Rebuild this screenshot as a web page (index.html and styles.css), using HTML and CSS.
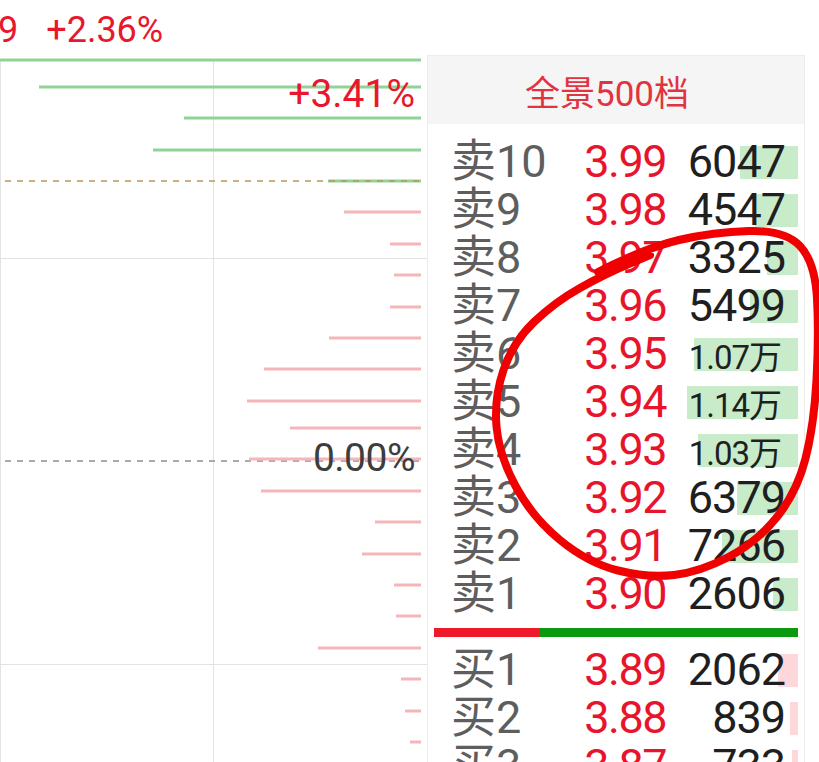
FILE: index.html
```html
<!DOCTYPE html>
<html lang="zh-CN">
<head>
    <meta charset="UTF-8">
    <meta name="viewport" content="width=device-width, initial-scale=1.0">
    <title>全景500档</title>
    <link rel="stylesheet" href="styles.css">
</head>
<body>

<div class="screen">
    <div class="depth">
        <svg class="depth-lines" width="427" height="762" viewBox="0 0 427 762">
            <g class="grid">
                <line x1="0.5" y1="60" x2="0.5" y2="762" />
                <line x1="213.5" y1="60" x2="213.5" y2="762" />
                <line x1="0" y1="258.5" x2="427" y2="258.5" />
                <line x1="0" y1="664.5" x2="427" y2="664.5" />
            </g>
            <g class="ask-lines">
                <line x1="0" y1="60" x2="421" y2="60" />
                <line x1="39" y1="87" x2="421" y2="87" />
                <line x1="184" y1="118" x2="421" y2="118" />
                <line x1="153" y1="150" x2="421" y2="150" />
                <line x1="328" y1="181" x2="421" y2="181" />
            </g>
            <line class="dash-prev" x1="5" y1="181" x2="421" y2="181" />
            <line class="dash-zero" x1="5" y1="461" x2="421" y2="461" />
            <g class="bid-lines">
                <line x1="344" y1="212" x2="421" y2="212" />
                <line x1="390" y1="244" x2="421" y2="244" />
                <line x1="394" y1="275" x2="421" y2="275" />
                <line x1="390" y1="307" x2="421" y2="307" />
                <line x1="329" y1="338" x2="421" y2="338" />
                <line x1="264" y1="369" x2="421" y2="369" />
                <line x1="247" y1="401" x2="421" y2="401" />
                <line x1="290" y1="428" x2="421" y2="428" />
                <line x1="249" y1="459" x2="421" y2="459" />
                <line x1="261" y1="491" x2="421" y2="491" />
                <line x1="375" y1="522" x2="421" y2="522" />
                <line x1="362" y1="554" x2="421" y2="554" />
                <line x1="394" y1="585" x2="421" y2="585" />
                <line x1="396" y1="616" x2="421" y2="616" />
                <line x1="318" y1="648" x2="421" y2="648" />
                <line x1="401" y1="679" x2="421" y2="679" />
                <line x1="405" y1="711" x2="421" y2="711" />
                <line x1="410" y1="742" x2="421" y2="742" />
            </g>
        </svg>
        <div class="pct pct-top"><span class="cut">9</span>+2.36%</div>
        <div class="pct pct-high">+3.41%</div>
        <div class="pct pct-zero">0.00%</div>
    </div>

    <div class="book">
        <div class="book-head">全景500档</div>

        <div class="levels asks">
            <div class="row"><span class="bar ask" style="width: 58px"></span><span class="name">卖10</span><span class="price">3.99</span><span class="vol">6047</span></div>
            <div class="row"><span class="bar ask" style="width: 43px"></span><span class="name">卖9</span><span class="price">3.98</span><span class="vol">4547</span></div>
            <div class="row"><span class="bar ask" style="width: 31px"></span><span class="name">卖8</span><span class="price">3.97</span><span class="vol">3325</span></div>
            <div class="row"><span class="bar ask" style="width: 48px"></span><span class="name">卖7</span><span class="price">3.96</span><span class="vol">5499</span></div>
            <div class="row"><span class="bar ask" style="width: 104px"></span><span class="name">卖6</span><span class="price">3.95</span><span class="vol small">1.07万</span></div>
            <div class="row"><span class="bar ask" style="width: 111px"></span><span class="name">卖5</span><span class="price">3.94</span><span class="vol small">1.14万</span></div>
            <div class="row"><span class="bar ask" style="width: 100px"></span><span class="name">卖4</span><span class="price">3.93</span><span class="vol small">1.03万</span></div>
            <div class="row"><span class="bar ask" style="width: 61px"></span><span class="name">卖3</span><span class="price">3.92</span><span class="vol">6379</span></div>
            <div class="row"><span class="bar ask" style="width: 76px"></span><span class="name">卖2</span><span class="price">3.91</span><span class="vol">7266</span></div>
            <div class="row"><span class="bar ask" style="width: 25px"></span><span class="name">卖1</span><span class="price">3.90</span><span class="vol">2606</span></div>
        </div>

        <div class="spread"><span class="spread-buy"></span><span class="spread-sell"></span></div>

        <div class="levels bids">
            <div class="row"><span class="bar bid" style="width: 20px"></span><span class="name">买1</span><span class="price">3.89</span><span class="vol">2062</span></div>
            <div class="row"><span class="bar bid" style="width: 8px"></span><span class="name">买2</span><span class="price">3.88</span><span class="vol">839</span></div>
            <div class="row"><span class="bar bid" style="width: 6px"></span><span class="name">买3</span><span class="price">3.87</span><span class="vol">733</span></div>
        </div>
    </div>

    <!-- hand drawn marker over the screenshot -->
    <svg class="mark" width="819" height="762" viewBox="0 0 819 762">
        <path d="M598,272 Q645,248 679,240 Q713,232 749,231 Q785,230 800,246 Q815,262 817,298.5 Q819,335 816.5,380 Q814,425 805.5,458.5 Q797,492 777,517 Q757,542 728.5,557 Q700,572 674,575 Q648,578 618,570.5 Q588,563 560,540 Q532,517 515.5,486 Q499,455 496.5,426.5 Q494,398 503.5,370 Q513,342 534,322 Q555,302 580,288 Q605,274 627.5,264.5 L650,255" />
    </svg>
</div>

</body>
</html>
```

FILE: styles.css
```css
* {
    box-sizing: border-box;
    margin: 0;
    padding: 0;
}
body {
    font-family: Roboto, "Noto Sans CJK SC", sans-serif;
    background: #fff;
    overflow: hidden;
}
.screen {
    position: relative;
    display: flex;
    width: 819px;
    height: 762px;
    overflow: hidden;
}

/* depth chart */
.depth {
    position: relative;
    width: 427px;
    height: 762px;
    flex-shrink: 0;
}
.depth-lines {
    display: block;
}
.grid line {
    stroke: #e3e3e3;
    stroke-width: 1;
}
.ask-lines line {
    stroke: #8fd494;
    stroke-width: 3;
}
.bid-lines line {
    stroke: #f5b5bb;
    stroke-width: 3;
}
.dash-prev {
    stroke: #b89858;
    stroke-opacity: 0.75;
    stroke-width: 2;
    stroke-dasharray: 6 6;
}
.dash-zero {
    stroke: #aaa;
    stroke-width: 2;
    stroke-dasharray: 6 6;
}
.pct {
    position: absolute;
    line-height: 1;
    white-space: nowrap;
    color: #e8172c;
}
.pct-top {
    top: 12px;
    left: -2px;
    font-size: 36px;
}
.pct-top .cut {
    margin-right: 28px;
}
.pct-high {
    top: 75px;
    right: 12px;
    font-size: 39px;
}
.pct-zero {
    top: 439px;
    right: 12px;
    font-size: 39px;
    letter-spacing: -0.5px;
    color: #3d3d3d;
}

/* order book */
.book {
    width: 378px;
    margin-top: 55px;
    border: 1px solid #ececec;
    border-bottom: none;
    flex-shrink: 0;
}
.book-head {
    height: 68px;
    background: #f5f5f5;
    display: flex;
    align-items: center;
    justify-content: center;
    padding-right: 18px;
    font-size: 35px;
    color: #e2333e;
}
.levels.asks {
    padding-top: 14px;
}
.row {
    position: relative;
    display: grid;
    grid-template-columns: 115px 100px 119px;
    align-items: baseline;
    height: 48px;
    padding: 0 19px 0 23px;
    line-height: 48px;
    white-space: nowrap;
}
.bar {
    position: absolute;
    right: 6px;
    top: 8px;
    height: 33px;
}
.bar.ask {
    background: #c8ebca;
}
.bar.bid {
    background: #fdd7d9;
}
.name, .price, .vol {
    position: relative;
}
.name {
    font-size: 45px;
    color: #5e5e5e;
}
.price {
    text-align: right;
    font-size: 45px;
    letter-spacing: -1.5px;
    color: #e8142c;
}
.vol {
    text-align: right;
    font-size: 45px;
    letter-spacing: -1px;
    color: #1f1f1f;
}
.vol.small {
    font-size: 33px;
    padding-right: 4px;
}
.spread {
    display: flex;
    height: 9px;
    margin: 10px 6px 9px;
}
.spread-buy {
    width: 106px;
    background: #ee1a2c;
}
.spread-sell {
    flex: 1;
    background: #0a990f;
}

.mark {
    position: absolute;
    top: 0;
    left: 0;
    pointer-events: none;
}
.mark path {
    fill: none;
    stroke: #f00000;
    stroke-width: 8;
    stroke-linecap: round;
    stroke-linejoin: round;
}
```
